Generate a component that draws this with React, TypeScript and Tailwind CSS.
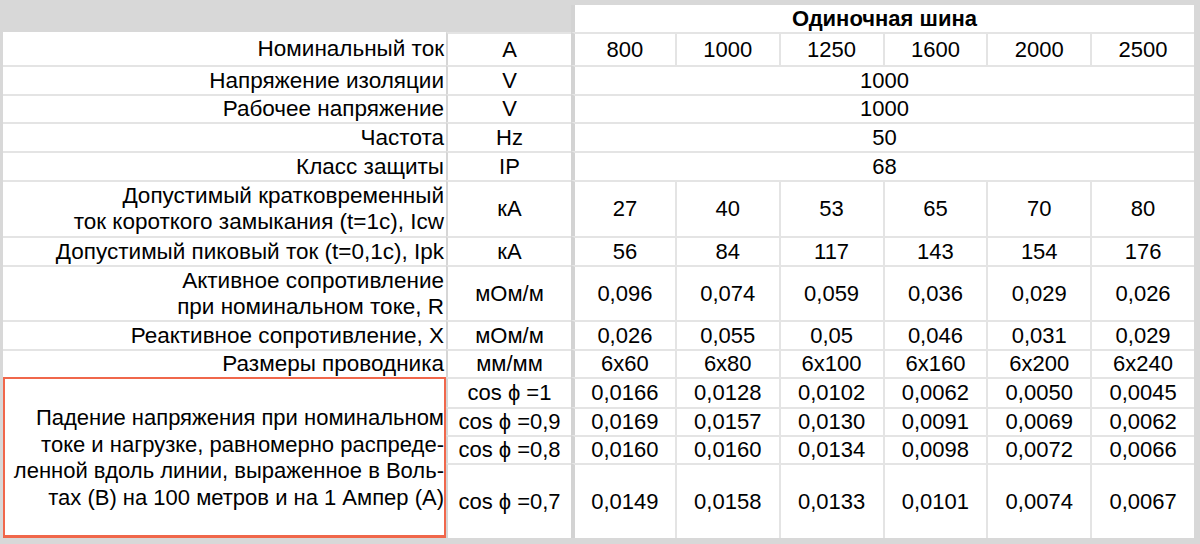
import type { ReactNode } from 'react';

type Row = {
  label: ReactNode;
  unit: string;
  values: string[] | string;
};

const rows: Row[] = [
  { label: 'Номинальный ток', unit: 'A', values: ['800', '1000', '1250', '1600', '2000', '2500'] },
  { label: 'Напряжение изоляции', unit: 'V', values: '1000' },
  { label: 'Рабочее напряжение', unit: 'V', values: '1000' },
  { label: 'Частота', unit: 'Hz', values: '50' },
  { label: 'Класс защиты', unit: 'IP', values: '68' },
  {
    label: (
      <>
        Допустимый кратковременный
        <br />
        ток короткого замыкания (t=1c), Icw
      </>
    ),
    unit: 'кА',
    values: ['27', '40', '53', '65', '70', '80'],
  },
  { label: 'Допустимый пиковый ток (t=0,1c), Ipk', unit: 'кА', values: ['56', '84', '117', '143', '154', '176'] },
  {
    label: (
      <>
        Активное сопротивление
        <br />
        при номинальном токе, R
      </>
    ),
    unit: 'мОм/м',
    values: ['0,096', '0,074', '0,059', '0,036', '0,029', '0,026'],
  },
  { label: 'Реактивное сопротивление, X', unit: 'мОм/м', values: ['0,026', '0,055', '0,05', '0,046', '0,031', '0,029'] },
  { label: 'Размеры проводника', unit: 'мм/мм', values: ['6x60', '6x80', '6x100', '6x160', '6x200', '6x240'] },
];

const drops = [
  { unit: 'cos ϕ =1', values: ['0,0166', '0,0128', '0,0102', '0,0062', '0,0050', '0,0045'] },
  { unit: 'cos ϕ =0,9', values: ['0,0169', '0,0157', '0,0130', '0,0091', '0,0069', '0,0062'] },
  { unit: 'cos ϕ =0,8', values: ['0,0160', '0,0160', '0,0134', '0,0098', '0,0072', '0,0066'] },
  { unit: 'cos ϕ =0,7', values: ['0,0149', '0,0158', '0,0133', '0,0101', '0,0074', '0,0067'] },
];

// value cells: first column gets the heavy divider after the units
const ValueCells = ({ values }: { values: string[] | string }) => {
  if (typeof values === 'string') {
    return (
      <div className="col-span-6 flex items-center justify-center bg-white text-[22px] border-t-2 border-l-4 border-t-[#e4e4e4] border-l-[#d3d3d3]">
        {values}
      </div>
    );
  }
  return (
    <>
      {values.map((v, i) => (
        <div
          key={i}
          className={
            i === 0
              ? 'flex items-center justify-center bg-white text-[22px] border-t-2 border-l-4 border-t-[#e4e4e4] border-l-[#d3d3d3]'
              : 'flex items-center justify-center bg-white text-[22px] border-t-2 border-l-2 border-[#e4e4e4]'
          }
        >
          {v}
        </div>
      ))}
    </>
  );
};

const UnitCell = ({ children }: { children: ReactNode }) => (
  <div className="flex items-center justify-center bg-white text-[22px] whitespace-nowrap border-t-2 border-l-2 border-t-[#e4e4e4] border-l-[#d6d6d6]">
    {children}
  </div>
);

export default function App() {
  return (
    <div className="w-[1200px] h-[544px] bg-[#d8d8d8] pt-[5px] pl-[3px] overflow-hidden font-['Liberation_Sans',Arial,sans-serif] text-[22.5px] leading-[26px] text-black">
      <div className="w-[1191px] grid grid-cols-[443px_125px_repeat(6,1fr)] grid-rows-[27px_33px_29px_28px_29px_29px_56px_29px_55px_29px_28px_30px_28px_28px_75px]">
        {/* header row */}
        <div className="col-span-2" />
        <div className="col-span-6 flex items-center justify-center bg-white border-l-4 border-[#d3d3d3] text-[22px] font-bold">
          Одиночная шина
        </div>

        {rows.map((r, i) => (
          <div key={i} className="contents">
            <div
              className={
                i === 0
                  ? 'flex items-center justify-end text-right whitespace-nowrap bg-white pr-[2px]'
                  : 'flex items-center justify-end text-right whitespace-nowrap bg-white pr-[2px] border-t-2 border-[#e4e4e4]'
              }
            >
              <span>{r.label}</span>
            </div>
            <UnitCell>{r.unit}</UnitCell>
            <ValueCells values={r.values} />
          </div>
        ))}

        {/* voltage drop block, highlighted */}
        <div className="row-span-4 flex items-center justify-end text-right whitespace-nowrap bg-white border-2 border-b-[3px] border-[#f0674b] text-[22px] leading-[26.5px] pt-[2px]">
          <span>
            Падение напряжения при номинальном
            <br />
            токе и нагрузке, равномерно распреде-
            <br />
            ленной вдоль линии, выраженное в Воль-
            <br />
            тах (В) на 100 метров и на 1 Ампер (А)
          </span>
        </div>
        {drops.map((d, i) => (
          <div key={i} className="contents">
            <UnitCell>{d.unit}</UnitCell>
            <ValueCells values={d.values} />
          </div>
        ))}
      </div>
    </div>
  );
}
